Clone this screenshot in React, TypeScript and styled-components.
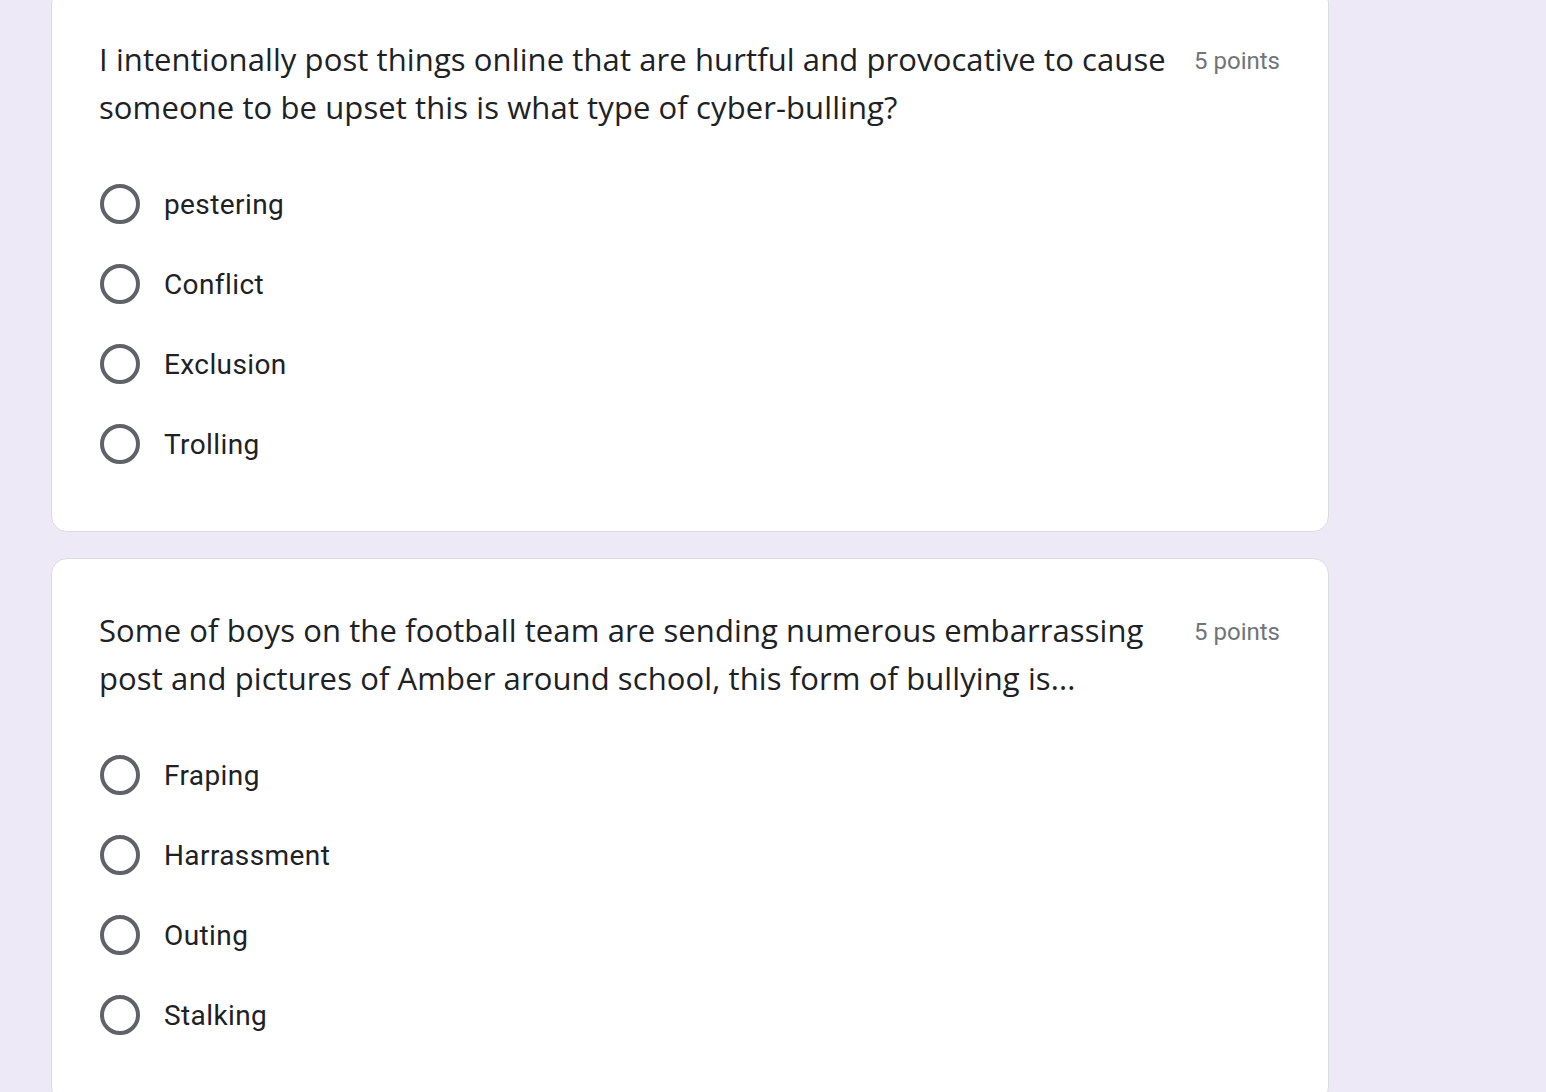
import React from "react";
import styled, { createGlobalStyle } from "styled-components";

const Global = createGlobalStyle`
  html, body {
    margin: 0;
    padding: 0;
    background: #ede9f7;
    overflow: hidden;
  }
  body {
    font-family: Roboto, "Liberation Sans", Arial, sans-serif;
  }
`;

const Page = styled.div`
  display: flex;
  flex-direction: column;
  gap: 26px;
  padding-left: 51px;
  margin-top: -13px;
  width: 1278px;
`;

const Card = styled.section`
  background: #fff;
  border: 1px solid #dadce0;
  border-radius: 16px;
  padding: 47px 48px 47px 47px;
  display: flex;
  flex-direction: column;
`;

const Header = styled.div`
  display: flex;
  align-items: flex-start;
  gap: 24px;
  margin-bottom: 33px;
`;

const Title = styled.div`
  flex: 1;
  font-family: "Open Sans", "Noto Sans", sans-serif;
  font-size: 31px;
  line-height: 48px;
  color: #202124;
  letter-spacing: 0.1px;
`;

const Points = styled.div`
  font-family: Roboto, sans-serif;
  font-size: 24px;
  line-height: 48px;
  color: #70757a;
  white-space: nowrap;
  padding-top: 2px;
`;

const Options = styled.div`
  display: flex;
  flex-direction: column;
`;

const Option = styled.label`
  display: flex;
  align-items: center;
  height: 80px;
  gap: 24px;
  padding-left: 1px;
`;

const Radio = styled.span`
  box-sizing: border-box;
  width: 40px;
  height: 40px;
  border-radius: 50%;
  border: 4px solid #5f6368;
  flex: none;
`;

const OptionText = styled.span`
  font-family: Roboto, sans-serif;
  font-size: 28px;
  color: #202124;
  letter-spacing: 0.4px;
`;

const questions = [
  {
    title:
      "I intentionally post things online that are hurtful and provocative to cause someone to be upset this is what type of cyber-bulling?",
    options: ["pestering", "Conflict", "Exclusion", "Trolling"],
  },
  {
    title:
      "Some of boys on the football team are sending numerous embarrassing post and pictures of Amber around school, this form of bullying is...",
    options: ["Fraping", "Harrassment", "Outing", "Stalking"],
  },
];

export default function App() {
  return (
    <>
      <Global />
      <Page>
        {questions.map((q, i) => (
          <Card key={i}>
            <Header>
              <Title>{q.title}</Title>
              <Points>5 points</Points>
            </Header>
            <Options>
              {q.options.map((o) => (
                <Option key={o}>
                  <Radio />
                  <OptionText>{o}</OptionText>
                </Option>
              ))}
            </Options>
          </Card>
        ))}
      </Page>
    </>
  );
}
